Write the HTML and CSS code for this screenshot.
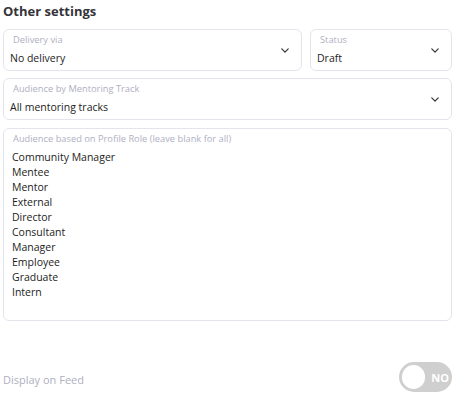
FILE: index.html
```html
<!DOCTYPE html>
<html>

<head>
  <meta charset="utf-8">
  <link rel="stylesheet" href="styles.css">
</head>

<body>
  <div class="container">
    <h2 class="section-title">Other settings</h2>

    <div class="field-row">
      <div class="field select delivery">
        <div class="field-body">
          <div class="field-label">Delivery via</div>
          <div class="field-value">No delivery</div>
        </div>
        <svg class="chevron" viewBox="0 0 10 6">
          <path d="M1 1l4 4 4-4" />
        </svg>
      </div>
      <div class="field select status">
        <div class="field-body">
          <div class="field-label">Status</div>
          <div class="field-value">Draft</div>
        </div>
        <svg class="chevron" viewBox="0 0 10 6">
          <path d="M1 1l4 4 4-4" />
        </svg>
      </div>
    </div>

    <div class="field select">
      <div class="field-body">
        <div class="field-label">Audience by Mentoring Track</div>
        <div class="field-value">All mentoring tracks</div>
      </div>
      <svg class="chevron" viewBox="0 0 10 6">
        <path d="M1 1l4 4 4-4" />
      </svg>
    </div>

    <div class="field multi">
      <div class="field-label">Audience based on Profile Role (leave blank for all)</div>
      <ul class="role-list">
        <li>Community Manager</li>
        <li>Mentee</li>
        <li>Mentor</li>
        <li>External</li>
        <li>Director</li>
        <li>Consultant</li>
        <li>Manager</li>
        <li>Employee</li>
        <li>Graduate</li>
        <li>Intern</li>
      </ul>
    </div>

    <div class="toggle-row">
      <div class="toggle-label">Display on Feed</div>
      <div class="toggle off">
        <div class="toggle-knob"></div>
        <span class="toggle-text">NO</span>
      </div>
    </div>
  </div>
</body>

</html>
```

FILE: styles.css
```css
* {
  box-sizing: border-box;
  margin: 0;
  padding: 0;
}

:root {
  --text: #1c1c22;
  --heading: #34343a;
  --muted: #afafc2;
  --border: #e4e4ec;
  --toggle-off: #cfcfcf;
}

body {
  width: 459px;
  font-family: 'Open Sans', Lato, Arial, sans-serif;
  color: var(--text);
  background: #fff;
  font-size: 10.5px;
}

.container {
  width: 449px;
  margin-left: 3px;
}

.section-title {
  font-size: 13px;
  font-weight: 700;
  color: var(--heading);
  line-height: 20px;
  margin-top: 1px;
  margin-bottom: 8px;
}

.field-row {
  display: flex;
  gap: 8px;
  margin-bottom: 7px;
}

.field {
  border: 1px solid var(--border);
  border-radius: 6px;
  background: #fff;
}

.field.select {
  height: 42px;
  display: flex;
  align-items: center;
  padding: 0 12px 0 6px;
  margin-bottom: 8px;
}

.field-row .field.select {
  margin-bottom: 0;
}

.delivery {
  width: 299px;
}

.status {
  flex: 1;
}

.field-body {
  flex: 1;
}

.field-label {
  font-size: 9.3px;
  line-height: 14px;
  color: var(--muted);
  padding-left: 3px;
  white-space: nowrap;
}

.field-value {
  font-size: 10.5px;
  font-weight: 500;
  line-height: 18px;
  margin-top: 2px;
}

.chevron {
  width: 8px;
  height: 5px;
  fill: none;
  stroke: #333;
  stroke-width: 1.5;
  stroke-linecap: round;
  stroke-linejoin: round;
}

.field.multi {
  height: 193px;
  padding: 3px 6px 0;
}

.field.multi .field-label {
  line-height: 14px;
}

.role-list {
  list-style: none;
  margin-top: 4px;
  padding-left: 2px;
}

.role-list li {
  font-size: 10.5px;
  font-weight: 500;
  line-height: 15px;
}

.toggle-row {
  display: flex;
  align-items: center;
  justify-content: space-between;
  margin-top: 41px;
}

.toggle-label {
  font-size: 11px;
  color: var(--muted);
  margin-top: 5px;
}

.toggle {
  width: 53px;
  height: 30px;
  border-radius: 15px;
  background: var(--toggle-off);
  display: flex;
  align-items: center;
  padding: 0 3px;
  gap: 6px;
}

.toggle-knob {
  width: 24px;
  height: 24px;
  border-radius: 50%;
  background: #fff;
}

.toggle-text {
  color: #fff;
  font-size: 11px;
  font-weight: 700;
}
```
